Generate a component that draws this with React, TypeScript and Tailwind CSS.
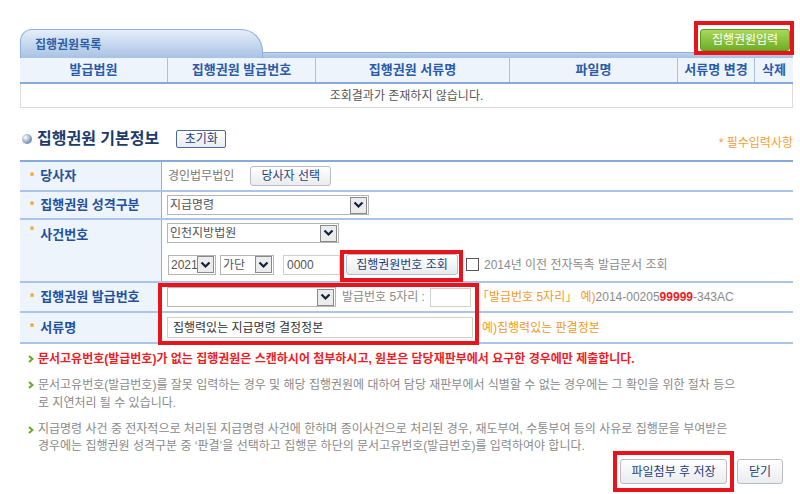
import React from "react";

const HEAD = ["발급법원", "집행권원 발급번호", "집행권원 서류명", "파일명", "서류명 변경", "삭제"];

function Arrow() {
  return (
    <span className="flex h-[17px] w-[17px] shrink-0 items-center justify-center border border-[#8a8a8a] bg-[#ececec]">
      <svg width="11" height="8" viewBox="0 0 11 8">
        <path d="M1.5 1.5 L5.5 5.5 L9.5 1.5" fill="none" stroke="#14213d" strokeWidth="2.2" />
      </svg>
    </span>
  );
}

function Select({ w, text }: { w: string; text: string }) {
  return (
    <div className={`flex h-[20px] items-center border border-[#b5b5b5] bg-white pl-[2px] pr-[1px] ${w}`}>
      <span className="flex-1 overflow-hidden whitespace-nowrap text-[12px] leading-none text-[#555]">{text}</span>
      <Arrow />
    </div>
  );
}

function Btn({ children, cls }: { children: React.ReactNode; cls: string }) {
  return (
    <div
      className={`flex items-center justify-center rounded-[3px] border border-[#b9bcc2] bg-gradient-to-b from-white to-[#e9ebee] text-[12px] text-[#1d3f7a] ${cls}`}
    >
      {children}
    </div>
  );
}

function Label({ text, cls = "items-center" }: { text: string; cls?: string }) {
  return (
    <div className={`flex w-[142px] shrink-0 gap-[6px] border-r border-[#8db0e0] bg-[#eef4fc] pl-[10px] ${cls}`}>
      <span className="text-[11px] font-bold leading-none text-[#f0a020]">*</span>
      <span className="text-[13px] font-bold text-[#22509e]">{text}</span>
    </div>
  );
}

function Chev() {
  return (
    <svg width="6" height="8" viewBox="0 0 6 8" className="mt-[5px] shrink-0">
      <path d="M1 1 L4.5 4 L1 7" fill="none" stroke="#6aab1e" strokeWidth="2" />
    </svg>
  );
}

export default function App() {
  return (
    <div className="relative h-[494px] w-[800px] overflow-hidden bg-white pl-[20px] pr-[7px] pt-[29px] font-['Liberation_Sans','Noto_Sans_CJK_KR',sans-serif]">
      {/* list tab + action */}
      <div className="flex h-[29px] items-end">
        <div className="flex h-full w-[243px] items-center rounded-tl-[12px] rounded-tr-[22px] border border-b-0 border-[#8eb0dc] bg-gradient-to-b from-[#e6eef9] to-[#a8c2e5] pl-[14px] pt-[1px]">
          <span className="text-[12px] font-bold text-[#2d5fa6]">집행권원목록</span>
        </div>
        <div className="flex h-full flex-1 flex-col">
          <div className="flex flex-1 justify-end pr-[3px]">
            <div className="flex h-[22px] w-[90px] items-center justify-center rounded-[3px] border border-[#5f9c1c] bg-gradient-to-b from-[#a8d85a] to-[#6fae22] text-[12px] text-white">
              집행권원입력
            </div>
          </div>
          <div className="h-[6px] border-t border-[#8eb0dc] bg-gradient-to-b from-[#bcd1ec] to-[#a6c1e4]" />
        </div>
      </div>

      <div className="grid h-[26px] grid-cols-[148px_148px_194px_168px_77px_38px] border-b-2 border-[#86aade] bg-[#eef4fc]">
        {HEAD.map((h, i) => (
          <div
            key={h}
            className={`flex items-center justify-center text-[13px] font-bold text-[#2a5aa8] ${i < 5 ? "border-r border-[#a6c2ea]" : ""}`}
          >
            {h}
          </div>
        ))}
      </div>
      <div className="flex h-[24px] items-center justify-center border-x border-b border-[#dcdcdc] text-[12px] text-[#555]">
        조회결과가 존재하지 않습니다.
      </div>

      {/* section title */}
      <div className="mt-[21px] flex h-[19px] items-center">
        <span className="ml-[2px] h-[10px] w-[10px] rounded-full bg-[radial-gradient(circle_at_35%_35%,#ffffff,#8fa2c6_55%,#43598a)]" />
        <span className="ml-[5px] text-[16px] font-bold text-[#1d3a6b]">집행권원 기본정보</span>
        <Btn cls="ml-[17px] h-[18px] w-[50px] !rounded-[2px] !border-[#4d6a94]">초기화</Btn>
        <span className="ml-auto mt-[8px] text-[12px] text-[#f5a030]">* 필수입력사항</span>
      </div>

      {/* form */}
      <div className="mt-[12px] border-t-2 border-[#86aade]">
        <div className="flex h-[30px] border-b-2 border-[#a9c5ec]">
          <Label text="당사자" />
          <div className="flex items-center pl-[6px] text-[12px] text-[#7a7a7a]">
            경인법무법인
            <Btn cls="ml-[16px] h-[20px] w-[81px]">당사자 선택</Btn>
          </div>
        </div>
        <div className="flex h-[28px] border-b-2 border-[#a9c5ec]">
          <Label text="집행권원 성격구분" />
          <div className="flex items-center pl-[5px]">
            <Select w="w-[202px]" text="지급명령" />
          </div>
        </div>
        <div className="flex h-[63px] border-b-2 border-[#a9c5ec]">
          <Label text="사건번호" cls="items-start pt-[5px]" />
          <div className="flex flex-col pl-[5px] pt-[3px]">
            <Select w="w-[172px]" text="인천지방법원" />
            <div className="mt-[11px] flex h-[21px] items-center">
              <Select w="ml-[1px] w-[48px]" text="2021" />
              <Select w="ml-[4px] w-[54px]" text="가단" />
              <div className="ml-[9px] flex h-[20px] w-[57px] items-center border border-[#cfcfcf] pl-[3px] text-[12px] text-[#555]">
                0000
              </div>
              <Btn cls="ml-[6px] h-[21px] w-[112px]">집행권원번호 조회</Btn>
              <span className="ml-[8px] h-[13px] w-[13px] border border-[#555] bg-white" />
              <span className="ml-[5px] text-[12px] text-[#8a8a8a]">2014년 이전 전자독촉 발급문서 조회</span>
            </div>
          </div>
        </div>
        <div className="flex h-[30px] border-b-2 border-[#a9c5ec]">
          <Label text="집행권원 발급번호" />
          <div className="flex items-center pl-[5px] text-[12px]">
            <Select w="w-[169px]" text="" />
            <span className="ml-[6px] text-[#8a8a8a]">발급번호 5자리 :</span>
            <div className="ml-[5px] h-[19px] w-[41px] border border-[#cfcfcf]" />
            <span className="ml-[6px] text-[#f39a1e]">「발급번호 5자리」 예)</span>
            <span className="text-[#8a8a8a]">2014-00205</span>
            <span className="font-bold text-[#ee1c25]">99999</span>
            <span className="text-[#8a8a8a]">-343AC</span>
          </div>
        </div>
        <div className="flex h-[31px] border-b-2 border-[#a9c5ec]">
          <Label text="서류명" />
          <div className="flex items-center pl-[5px] text-[12px]">
            <div className="flex h-[21px] w-[306px] items-center border border-[#cfcfcf] pl-[5px] text-[#333]">
              집행력있는 지급명령 결정정본
            </div>
            <span className="ml-[9px] text-[#f39a1e]">예)집행력있는 판결정본</span>
          </div>
        </div>
      </div>

      {/* notes */}
      <div className="mt-[6px] flex flex-col pl-[8px] text-[12px] leading-[18px] whitespace-nowrap">
        <div className="flex gap-[4px] font-bold text-[#ee1c25]">
          <Chev />
          <span>문서고유번호(발급번호)가 없는 집행권원은 스캔하시어 첨부하시고, 원본은 담당재판부에서 요구한 경우에만 제출합니다.</span>
        </div>
        <div className="mt-[8px] flex gap-[4px] text-[#8a8a8a]">
          <Chev />
          <span>
            문서고유번호(발급번호)를 잘못 입력하는 경우 및 해당 집행권원에 대하여 담당 재판부에서 식별할 수 없는 경우에는 그 확인을 위한 절차 등으
            <br />로 지연처리 될 수 있습니다.
          </span>
        </div>
        <div className="mt-[9px] flex gap-[4px] leading-[17px] text-[#8a8a8a]">
          <Chev />
          <span>
            지급명령 사건 중 전자적으로 처리된 지급명령 사건에 한하며 종이사건으로 처리된 경우, 재도부여, 수통부여 등의 사유로 집행문을 부여받은
            <br />경우에는 집행권원 성격구분 중 ‘판결’을 선택하고 집행문 하단의 문서고유번호(발급번호)를 입력하여야 합니다.
          </span>
        </div>
      </div>

      <div className="mt-[4px] flex justify-end gap-[10px] pr-[10px]">
        <Btn cls="h-[25px] w-[107px]">파일첨부 후 저장</Btn>
        <Btn cls="h-[25px] w-[46px]">닫기</Btn>
      </div>

      {/* annotation boxes */}
      <div className="pointer-events-none absolute left-[694px] top-[21px] h-[34px] w-[100px] border-4 border-[#e8141c]" />
      <div className="pointer-events-none absolute left-[340px] top-[250px] h-[32px] w-[123px] border-4 border-[#e8141c]" />
      <div className="pointer-events-none absolute left-[158px] top-[283px] h-[62px] w-[321px] border-4 border-[#e8141c]" />
      <div className="pointer-events-none absolute left-[613px] top-[451px] h-[41px] w-[121px] border-4 border-[#e8141c]" />
    </div>
  );
}
